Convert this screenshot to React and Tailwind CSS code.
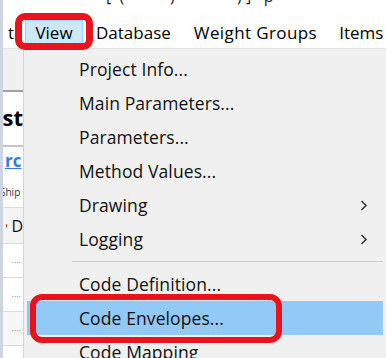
import React from "react";

function Chevron() {
  return (
    <svg width="8" height="13" viewBox="0 0 8 13" className="shrink-0">
      <polyline points="1.5,2 6,6.5 1.5,11" fill="none" stroke="#3a3a3a" strokeWidth="1.6" />
    </svg>
  );
}

function Item({ label, sub, active }) {
  return (
    <div
      className={
        "h-[34px] flex items-center pl-[52px] pr-[15px] text-[17.5px] text-[#111] " +
        (active ? "bg-[#91c9f7]" : "")
      }
    >
      <span className="flex-1 whitespace-nowrap tracking-[0.1px]">{label}</span>
      {sub ? <Chevron /> : null}
    </div>
  );
}

export default function App() {
  return (
    <div className="relative w-[386px] h-[358px] overflow-hidden bg-white font-['Open_Sans',sans-serif] text-black flex">
      <div className="w-[3px] shrink-0 bg-[#cdd4e4]" />
      <div className="flex-1 min-w-0 flex flex-col">
        {/* title strip (cut off) */}
        <div className="h-[13px] overflow-hidden">
          <div className="whitespace-pre text-[16px] leading-[20px] mt-[-14px] pl-[103px] text-[#222]">
            {"[  (           )               ) ]   p"}
          </div>
        </div>
        {/* menubar */}
        <div className="h-[36px] border-b border-[#e3e3e3] flex items-end pb-[2px] text-[17px] whitespace-nowrap">
          <div className="w-[22px] h-[26px] flex items-center justify-end pr-[11px] overflow-hidden">t</div>
          <div className="w-[58px] h-[26px] flex items-center justify-center bg-[#cce8ff] border border-[#99d1ff]">
            View
          </div>
          <div className="h-[26px] flex items-center ml-[13px]">Database</div>
          <div className="h-[26px] flex items-center ml-[23px] tracking-[0.4px]">Weight Groups</div>
          <div className="h-[26px] flex items-center ml-[22px]">Items</div>
        </div>
        {/* body */}
        <div className="flex-1 flex min-h-0">
          {/* left panel */}
          <div className="w-[21px] shrink-0 border-r border-[#d4d4d4] flex flex-col overflow-hidden">
            <div className="h-[41px] bg-[#f0f0f0]" />
            <div className="h-[2px] bg-[#a2a2a2]" />
            <div className="h-[53px] flex items-center justify-end pb-[4px] text-[22px] font-bold leading-none whitespace-nowrap overflow-hidden">
              st
            </div>
            <div className="h-[2px] bg-[#c6c6c6]" />
            <div className="h-[60px] flex flex-col overflow-hidden">
              <div className="pl-[2px] pt-[4px] text-[17px] leading-[20px] font-bold text-[#3a78dc] underline whitespace-nowrap">
                rc
              </div>
              <div className="mt-[15px] ml-[-3px] text-[10px] leading-[12px] text-[#333] whitespace-nowrap">Ship</div>
            </div>
            <div className="h-[1px] bg-[#dadada]" />
            <div className="h-[35px] bg-[#f4f4f4] flex items-center whitespace-nowrap">
              <span className="ml-[3px] w-[3px] h-[3px] rounded-full bg-[#e02020]" />
              <span className="ml-[5px] text-[16px] leading-none text-[#111]">D</span>
            </div>
            <div className="h-[1px] bg-[#dadada]" />
            <div className="h-[33px] bg-white flex items-end justify-end pr-[2px] pb-[10px] text-[9px] text-[#888] leading-none">····</div>
            <div className="h-[1px] bg-[#dadada]" />
            <div className="h-[33px] bg-white flex items-end justify-end pr-[2px] pb-[10px] text-[9px] text-[#888] leading-none">····</div>
            <div className="h-[1px] bg-[#dadada]" />
            <div className="h-[33px] bg-[#f7f7f7] flex items-end justify-end pr-[2px] pb-[10px] text-[9px] text-[#888] leading-none">····</div>
            <div className="h-[1px] bg-[#dadada]" />
          </div>
          {/* dropdown */}
          <div className="flex-1 bg-[#f0f0f0] pt-[3px] px-[3px] overflow-hidden">
            <Item label="Project Info..." />
            <Item label="Main Parameters..." />
            <Item label="Parameters..." />
            <Item label="Method Values..." />
            <Item label="Drawing" sub />
            <Item label="Logging" sub />
            <div className="h-[11px] flex items-center pl-[45px]">
              <div className="h-[1px] w-full bg-[#cfcfcf]" />
            </div>
            <Item label="Code Definition..." />
            <Item label="Code Envelopes..." active />
            <Item label="Code Mapping" />
          </div>
        </div>
      </div>
      {/* annotations */}
      <div className="absolute left-[15px] top-[13px] w-[78px] h-[37px] border-[7px] border-[#e8131c] rounded-[10px]" />
      <div className="absolute left-[30px] top-[294px] w-[252px] h-[49px] border-[6px] border-[#e8131c] rounded-[12px]" />
    </div>
  );
}
